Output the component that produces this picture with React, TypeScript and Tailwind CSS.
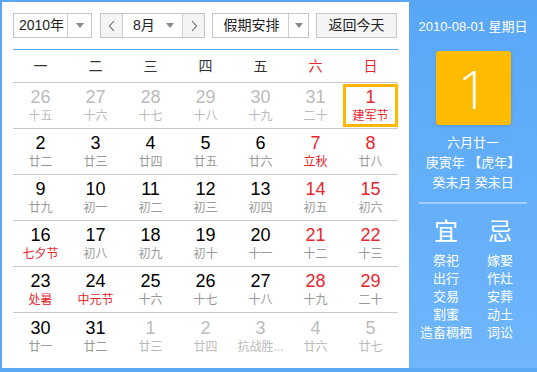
type Day = { n: number; l: string; other?: boolean; red?: boolean; redL?: boolean; today?: boolean };

const weeks: Day[][] = [
  [
    { n: 26, l: '十五', other: true },
    { n: 27, l: '十六', other: true },
    { n: 28, l: '十七', other: true },
    { n: 29, l: '十八', other: true },
    { n: 30, l: '十九', other: true },
    { n: 31, l: '二十', other: true },
    { n: 1, l: '建军节', red: true, redL: true, today: true },
  ],
  [
    { n: 2, l: '廿二' },
    { n: 3, l: '廿三' },
    { n: 4, l: '廿四' },
    { n: 5, l: '廿五' },
    { n: 6, l: '廿六' },
    { n: 7, l: '立秋', red: true, redL: true },
    { n: 8, l: '廿八', red: true },
  ],
  [
    { n: 9, l: '廿九' },
    { n: 10, l: '初一' },
    { n: 11, l: '初二' },
    { n: 12, l: '初三' },
    { n: 13, l: '初四' },
    { n: 14, l: '初五', red: true },
    { n: 15, l: '初六', red: true },
  ],
  [
    { n: 16, l: '七夕节', redL: true },
    { n: 17, l: '初八' },
    { n: 18, l: '初九' },
    { n: 19, l: '初十' },
    { n: 20, l: '十一' },
    { n: 21, l: '十二', red: true },
    { n: 22, l: '十三', red: true },
  ],
  [
    { n: 23, l: '处暑', redL: true },
    { n: 24, l: '中元节', redL: true },
    { n: 25, l: '十六' },
    { n: 26, l: '十七' },
    { n: 27, l: '十八' },
    { n: 28, l: '十九', red: true },
    { n: 29, l: '二十', red: true },
  ],
  [
    { n: 30, l: '廿一' },
    { n: 31, l: '廿二' },
    { n: 1, l: '廿三', other: true },
    { n: 2, l: '廿四', other: true },
    { n: 3, l: '抗战胜...', other: true },
    { n: 4, l: '廿六', other: true },
    { n: 5, l: '廿七', other: true },
  ],
];

const yi = ['祭祀', '出行', '交易', '割蜜', '造畜稠栖'];
const ji = ['嫁娶', '作灶', '安葬', '动土', '词讼'];

const Caret = () => (
  <span className="block w-0 h-0 border-l-[4px] border-r-[4px] border-t-[5px] border-l-transparent border-r-transparent border-t-[#888]" />
);

const Chevron = ({ dir }: { dir: 'l' | 'r' }) => (
  <svg width="8" height="12" viewBox="0 0 8 12">
    <polyline
      points={dir === 'l' ? '6,1 1.5,6 6,11' : '2,1 6.5,6 2,11'}
      fill="none"
      stroke="#666"
      strokeWidth="1.1"
    />
  </svg>
);

const App = () => {
  return (
    <div
      className="w-[537px] h-[372px] flex border-l-2 border-t-2 border-b-4 border-[#5aa8f5] bg-white text-[#333]"
      style={{ fontFamily: '"Liberation Sans", "Noto Sans CJK SC", sans-serif' }}
    >
      {/* 左侧日历 */}
      <div className="w-[407px] shrink-0 px-[11px] pt-[11px]">
        {/* 工具栏 */}
        <div className="flex h-[25px] text-[14px]">
          <div className="flex w-[79px] border border-[#c4c4c4]">
            <div className="flex-1 flex items-center justify-center pl-[2px] text-[#222]">2010年</div>
            <div className="w-[24px] border-l border-[#d0d0d0] flex items-center justify-center">
              <Caret />
            </div>
          </div>
          <div className="flex w-[105px] ml-[8px] border border-[#c4c4c4]">
            <div className="w-[22px] bg-[#f4f4f4] border-r border-[#d0d0d0] flex items-center justify-center">
              <Chevron dir="l" />
            </div>
            <div className="flex-1 flex items-center pl-[10px] pr-[8px] text-[#222]">
              <span className="flex-1">8月</span>
              <Caret />
            </div>
            <div className="w-[22px] bg-[#f4f4f4] border-l border-[#d0d0d0] flex items-center justify-center">
              <Chevron dir="r" />
            </div>
          </div>
          <div className="flex w-[97px] ml-[7px] border border-[#c4c4c4]">
            <div className="flex-1 flex items-center justify-center pl-[2px] text-[#222]">假期安排</div>
            <div className="w-[20px] border-l border-[#d0d0d0] flex items-center justify-center">
              <Caret />
            </div>
          </div>
          <button className="w-[81px] ml-[7px] border border-[#c8c8c8] bg-[#f4f4f4] text-[#222] flex items-center justify-center">
            返回今天
          </button>
        </div>

        {/* 星期 */}
        <div className="mt-[11px] border-t border-[#5aa8f5] border-b border-b-[#c8c8c8] grid grid-cols-7 h-[34px] text-[14px]">
          {['一', '二', '三', '四', '五', '六', '日'].map((w, i) => (
            <div key={w} className={`flex items-center justify-center ${i >= 5 ? 'text-[#e8252d]' : 'text-[#333]'}`}>
              {w}
            </div>
          ))}
        </div>

        {/* 日期 */}
        {weeks.map((week, wi) => (
          <div key={wi} className={`grid grid-cols-7 h-[46px] ${wi < 5 ? 'border-b border-[#c8c8c8]' : ''}`}>
            {week.map((d, di) => {
              const numColor = d.other ? 'text-[#bbb]' : d.red ? 'text-[#e8252d]' : 'text-black';
              const lColor = d.other ? 'text-[#bbb]' : d.redL ? 'text-[#e8252d]' : 'text-[#999]';
              return (
                <div
                  key={di}
                  className={`flex flex-col items-center justify-center ${d.today ? 'border-[3px] border-[#ffb800] my-[1px]' : ''}`}
                >
                  <span className={`text-[18px] leading-[20px] ${numColor}`}>{d.n}</span>
                  <span className={`text-[12px] leading-[16px] mt-[1px] whitespace-nowrap ${lColor}`}>{d.l}</span>
                </div>
              );
            })}
          </div>
        ))}
      </div>

      {/* 右侧详情 */}
      <div className="flex-1 bg-gradient-to-b from-[#58a7f7] to-[#6fb6fb] text-white flex flex-col items-center">
        <div className="mt-[17px] text-[13px] leading-[16px]">2010-08-01 星期日</div>
        <div
          className="mt-[16px] w-[75px] h-[74px] rounded-[3px] bg-[#ffbb00] shadow-[0_1px_3px_rgba(0,0,0,0.15)] flex items-center justify-center text-[54px] font-light"
          style={{ fontFamily: '"Open Sans", "Liberation Sans", sans-serif' }}
        >
          1
        </div>
        <div className="mt-[8px] text-[13px] leading-[20px] text-center">
          <div>六月廿一</div>
          <div>庚寅年 【虎年】</div>
          <div>癸未月 癸未日</div>
        </div>
        <div className="mt-[9px] w-[108px] h-[2px] bg-white/40" />
        <div className="w-[108px] grid grid-cols-2 mt-[14px]">
          <div className="flex flex-col items-center">
            <div className="text-[24px] leading-[28px]">宜</div>
            <div className="mt-[6px] text-[13px] leading-[18px] text-center">
              {yi.map((t) => (
                <div key={t} className="whitespace-nowrap">{t}</div>
              ))}
            </div>
          </div>
          <div className="flex flex-col items-center">
            <div className="text-[24px] leading-[28px]">忌</div>
            <div className="mt-[6px] text-[13px] leading-[18px] text-center">
              {ji.map((t) => (
                <div key={t}>{t}</div>
              ))}
            </div>
          </div>
        </div>
      </div>
    </div>
  );
};

export default App;
